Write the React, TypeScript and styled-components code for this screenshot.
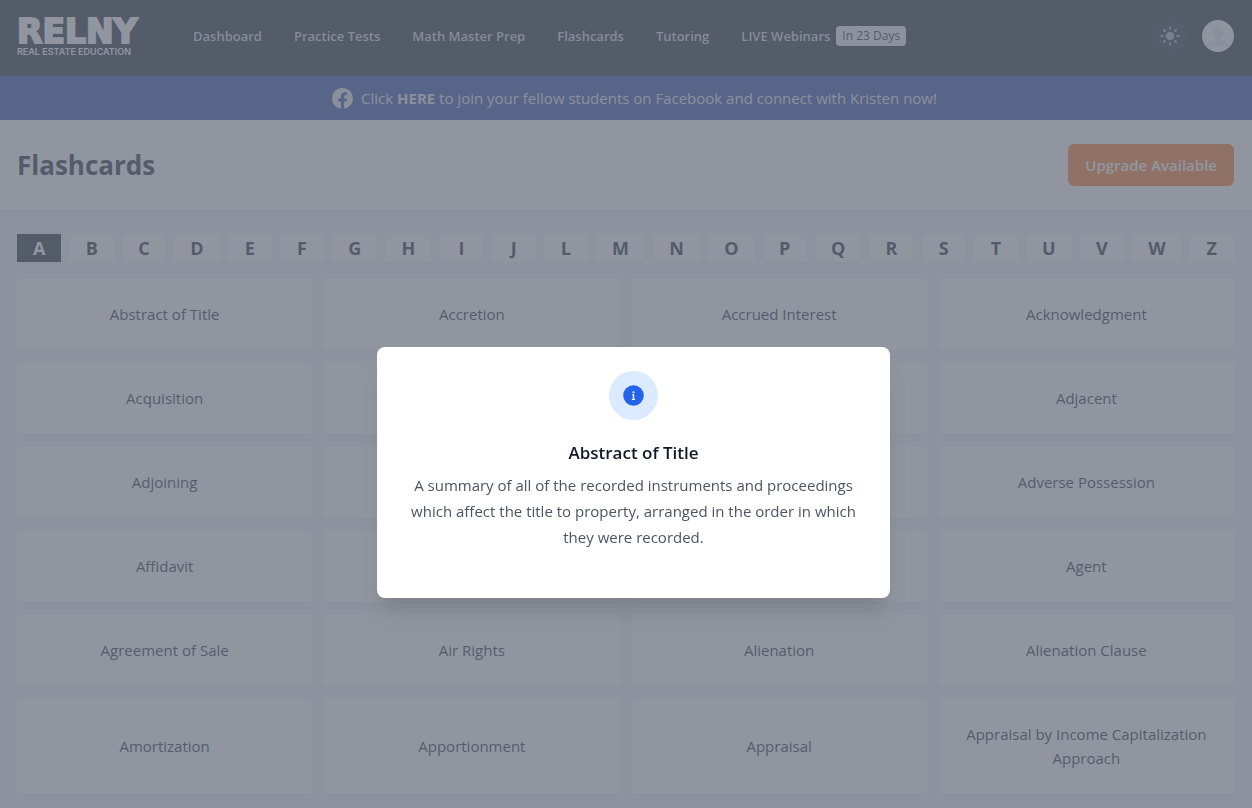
import React from "react";
import styled, { createGlobalStyle } from "styled-components";

const GlobalStyle = createGlobalStyle`
  *, *::before, *::after { box-sizing: border-box; }
  body {
    margin: 0;
    background: #f3f4f6;
    color: #111827;
    font-family: "Open Sans", "Noto Sans", sans-serif;
    font-size: 15px;
    line-height: 24px;
    overflow: hidden;
  }
  button { font: inherit; color: inherit; border: 0; cursor: pointer; }
  a { color: inherit; text-decoration: none; }
`;

const Header = styled.header`
  display: flex;
  align-items: center;
  height: 76px;
  padding: 0 18px 4px 17px;
  background: #111827;
  color: #d1d5db;
`;

const Brand = styled.a`
  display: flex;
  flex-direction: column;
  width: 144px;
  margin-right: 32px;
  padding-top: 4px;
  color: #fff;
  white-space: nowrap;
`;

const BrandName = styled.span`
  font: 700 33px/28px "DejaVu Sans", sans-serif;
  -webkit-text-stroke: 2px currentColor;
`;

const BrandTagline = styled.span`
  font: 600 9px/12px Inter, sans-serif;
`;

const Nav = styled.nav`
  display: flex;
  align-items: center;
  gap: 32px;
  font-size: 13px;
  font-weight: 600;
  line-height: 20px;
  white-space: nowrap;
`;

const NavLink = styled.a`
  display: flex;
  align-items: center;
  gap: 6px;
`;

const Badge = styled.span`
  padding: 0 6px;
  border-radius: 4px;
  background: #f3f4f6;
  color: #111827;
  font-size: 12px;
  font-weight: 400;
`;

const HeaderActions = styled.div`
  display: flex;
  align-items: center;
  gap: 14px;
  margin-left: auto;
`;

const RoundButton = styled.button<{ $size: number; $tone: string }>`
  display: grid;
  place-items: center;
  width: ${(p) => p.$size}px;
  height: ${(p) => p.$size}px;
  padding: 0;
  border-radius: 50%;
  overflow: hidden;
  background: ${(p) => p.$tone};
`;

const Banner = styled.a`
  display: flex;
  align-items: center;
  justify-content: center;
  gap: 6px;
  height: 44px;
  padding-left: 15px;
  background: #1e40a0;
  color: #e5e7eb;
`;

const TitleBar = styled.div`
  display: flex;
  align-items: center;
  justify-content: space-between;
  height: 90px;
  padding: 0 18px 0 17px;
  background: #fff;
  box-shadow: 0 1px 3px rgba(0, 0, 0, 0.04);
`;

const Title = styled.h1`
  margin: 0;
  font-size: 26px;
  font-weight: 700;
  line-height: 40px;
`;

const UpgradeButton = styled.button`
  height: 42px;
  padding: 0 17px;
  border-radius: 6px;
  background: #f97316;
  color: #fff;
  font-weight: 600;
`;

const Main = styled.main`
  padding: 24px 18px 12px 17px;
`;

const Letters = styled.div`
  display: flex;
  justify-content: space-between;
  margin-bottom: 16px;
`;

const Letter = styled.button<{ $active: boolean }>`
  min-width: 44px;
  height: 28px;
  padding: 0 16px;
  background: ${(p) => (p.$active ? "#111827" : "#fff")};
  color: ${(p) => (p.$active ? "#fff" : "#111827")};
  box-shadow: 0 1px 3px rgba(0, 0, 0, 0.04);
  font-size: 18px;
  font-weight: 700;
  line-height: 28px;
`;

const CardGrid = styled.div`
  display: grid;
  grid-template-columns: repeat(4, minmax(0, 1fr));
  gap: 12px;
`;

const Card = styled.button`
  min-height: 72px;
  padding: 24px 16px;
  border-radius: 2px;
  background: #fff;
  box-shadow: 0 1px 3px rgba(0, 0, 0, 0.03);
  text-align: center;
`;

const Overlay = styled.div`
  position: fixed;
  inset: 0;
  display: flex;
  align-items: flex-start;
  justify-content: center;
  padding: 43vh 0 0 15px;
  background: rgba(107, 114, 128, 0.75);
`;

const Dialog = styled.section`
  display: flex;
  flex-direction: column;
  align-items: center;
  width: 513px;
  max-width: 100%;
  padding: 24px 24px 48px;
  border-radius: 8px;
  background: #fff;
  box-shadow: 0 20px 25px -5px rgba(0, 0, 0, 0.1), 0 10px 10px -5px rgba(0, 0, 0, 0.04);
  text-align: center;
`;

const InfoBadge = styled.div`
  display: grid;
  place-items: center;
  width: 49px;
  height: 49px;
  border-radius: 50%;
  background: #dbeafe;
`;

const DialogTitle = styled.h2`
  margin: 20px 0 7px;
  font-size: 17px;
  font-weight: 600;
  line-height: 25px;
`;

const DialogText = styled.p`
  margin: 0;
  color: #4b5563;
  line-height: 26px;
`;

const FacebookIcon = () => (
  <svg width="25" height="25" viewBox="0 0 24 24" fill="currentColor" aria-hidden="true">
    <path d="M22 12c0-5.523-4.477-10-10-10S2 6.477 2 12c0 4.991 3.657 9.128 8.438 9.878v-6.987h-2.540V12h2.540V9.797c0-2.506 1.492-3.890 3.777-3.890 1.094 0 2.238.195 2.238.195v2.460h-1.260c-1.243 0-1.630.771-1.630 1.562V12h2.773l-.443 2.890h-2.330v6.988C18.343 21.128 22 16.991 22 12z" />
  </svg>
);

const SunIcon = () => (
  <svg width="20" height="20" viewBox="0 0 20 20" aria-hidden="true">
    <circle cx="10" cy="10" r="4.3" fill="#9ca3af" />
    {[0, 45, 90, 135, 180, 225, 270, 315].map((angle) => (
      <path
        key={angle}
        d="M10 1.300v1.600"
        stroke="#9ca3af"
        strokeWidth="1.900"
        strokeLinecap="round"
        transform={`rotate(${angle} 10 10)`}
      />
    ))}
  </svg>
);

const AvatarIcon = () => (
  <svg width="32" height="32" viewBox="0 0 32 32" aria-hidden="true">
    <path
      d="M16 6c-3.600 0-5.500 2.600-5.500 6 0 2.700 1.200 5.200 3 6.600v1.600L6.500 22.500 4 27h24l-2.500-4.500-7-2.300v-1.600c1.800-1.400 3-3.900 3-6.600 0-3.400-1.900-6-5.500-6z"
      fill="#e3e6ea"
    />
  </svg>
);

const InfoIcon = () => (
  <svg width="21" height="21" viewBox="0 0 21 21" aria-hidden="true">
    <circle cx="10.500" cy="10.500" r="10.300" fill="#2563eb" />
    <circle cx="10.500" cy="7.200" r="1" fill="#fff" />
    <path d="M9 9.300h2.200v4.700h.9v.9H8.900V14h.9v-3.800H9z" fill="#fff" />
  </svg>
);

const navItems = ["Dashboard", "Practice Tests", "Math Master Prep", "Flashcards", "Tutoring"];

const letters = "ABCDEFGHIJLMNOPQRSTUVWZ".split("");

const terms = [
  "Abstract of Title", "Accretion", "Accrued Interest", "Acknowledgment",
  "Acquisition", "", "", "Adjacent",
  "Adjoining", "", "", "Adverse Possession",
  "Affidavit", "", "", "Agent",
  "Agreement of Sale", "Air Rights", "Alienation", "Alienation Clause",
  "Amortization", "Apportionment", "Appraisal", "Appraisal by Income Capitalization Approach",
];

export default function App() {
  return (
    <>
      <GlobalStyle />
      <Header>
        <Brand href="#">
          <BrandName>RELNY</BrandName>
          <BrandTagline>REAL ESTATE EDUCATION</BrandTagline>
        </Brand>
        <Nav>
          {navItems.map((item) => (
            <NavLink key={item} href="#">{item}</NavLink>
          ))}
          <NavLink href="#">
            LIVE Webinars <Badge>In 23 Days</Badge>
          </NavLink>
        </Nav>
        <HeaderActions>
          <RoundButton $size={36} $tone="#1a2230" aria-label="Toggle theme">
            <SunIcon />
          </RoundButton>
          <RoundButton $size={32} $tone="#f9fafb" aria-label="Account">
            <AvatarIcon />
          </RoundButton>
        </HeaderActions>
      </Header>
      <Banner href="#">
        <FacebookIcon />
        <span>
          Click <strong>HERE</strong> to join your fellow students on Facebook and connect with Kristen now!
        </span>
      </Banner>
      <TitleBar>
        <Title>Flashcards</Title>
        <UpgradeButton>Upgrade Available</UpgradeButton>
      </TitleBar>
      <Main>
        <Letters>
          {letters.map((letter) => (
            <Letter key={letter} $active={letter === "A"}>{letter}</Letter>
          ))}
        </Letters>
        <CardGrid>
          {terms.map((term, index) => (
            <Card key={index}>{term}</Card>
          ))}
        </CardGrid>
      </Main>
      <Overlay>
        <Dialog role="dialog" aria-modal="true" aria-labelledby="term-title">
          <InfoBadge>
            <InfoIcon />
          </InfoBadge>
          <DialogTitle id="term-title">Abstract of Title</DialogTitle>
          <DialogText>
            A summary of all of the recorded instruments and proceedings which affect the title to
            property, arranged in the order in which they were recorded.
          </DialogText>
        </Dialog>
      </Overlay>
    </>
  );
}
